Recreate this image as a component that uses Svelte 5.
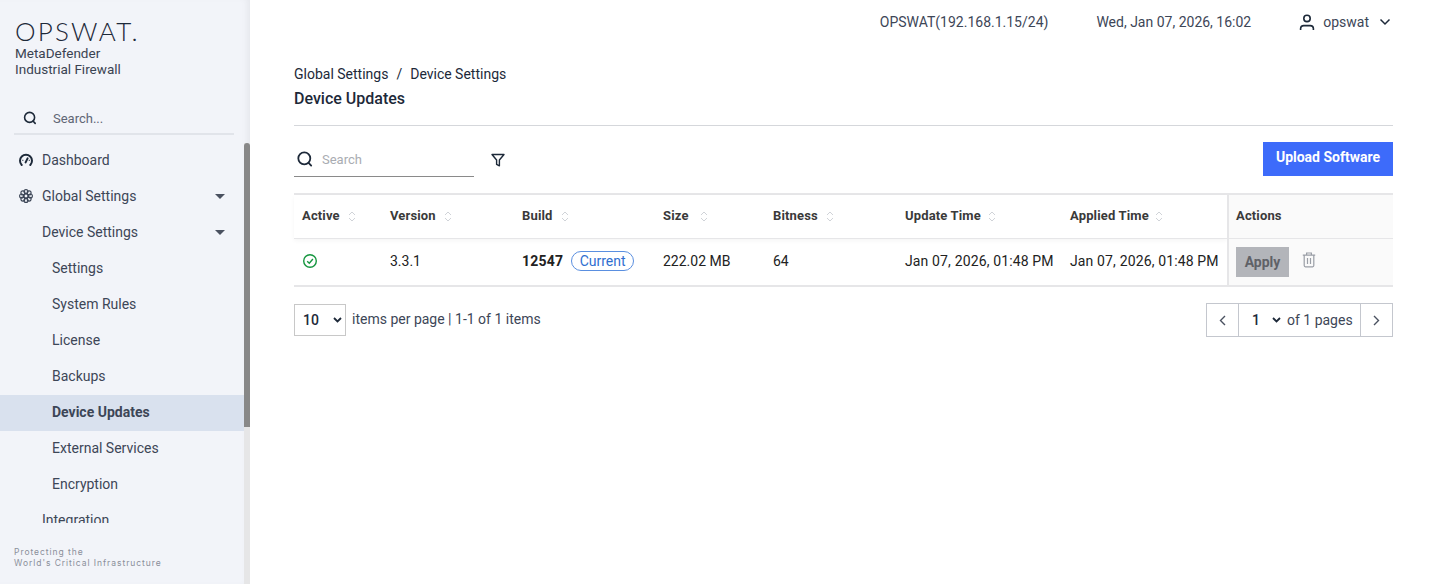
<script>
  const subItems = ['Settings', 'System Rules', 'License', 'Backups', 'Device Updates', 'External Services', 'Encryption'];
  const columns = [
    { label: 'Active', width: 88, gap: 8 },
    { label: 'Version', width: 132, gap: 8 },
    { label: 'Build', width: 141, gap: 8 },
    { label: 'Size', width: 110, gap: 11 },
    { label: 'Bitness', width: 132, gap: 8 },
    { label: 'Update Time', width: 165, gap: 7 },
    { label: 'Applied Time', width: 167, gap: 6 }
  ];
</script>

<div class="page">
  <aside class="sidebar">
    <div class="brand">
      <div class="logo">OPSWAT.</div>
      <div class="product">MetaDefender<br />Industrial Firewall</div>
    </div>

    <div class="nav-search">
      <svg width="16" height="16" viewBox="0 0 16 16" fill="none" stroke="#1d2939" stroke-width="1.6" stroke-linecap="round">
        <circle cx="7.6" cy="7.4" r="5" />
        <path d="M11.2 11.2 13.2 13.4" />
      </svg>
      <span>Search...</span>
    </div>

    <nav>
      <div class="nav-row">
        <svg class="nav-icon" width="14" height="14" viewBox="0 0 14 14" fill="none" stroke="#1d2939" stroke-width="2">
          <path d="M2.700 12A6 6 0 1 1 11.300 12" stroke-linecap="round" />
          <path d="M6.600 9.400 8.600 5.400" stroke-width="2" stroke-linecap="round" />
          <path d="M3.400 7.400h.9M9.800 7.400h.9" stroke-width="1.300" />
        </svg>
        <span>Dashboard</span>
      </div>
      <div class="nav-row">
        <svg class="nav-icon" width="14" height="14" viewBox="0 0 14 14" fill="none" stroke="#3d4657" stroke-width="1.100">
          <circle cx="7" cy="7" r="2" />
          <circle cx="7" cy="2.600" r="2" />
          <circle cx="7" cy="11.400" r="2" />
          <circle cx="2.600" cy="7" r="2" />
          <circle cx="11.400" cy="7" r="2" />
          <circle cx="3.900" cy="3.900" r="2" />
          <circle cx="10.100" cy="3.900" r="2" />
          <circle cx="3.900" cy="10.100" r="2" />
          <circle cx="10.100" cy="10.100" r="2" />
        </svg>
        <span>Global Settings</span>
        <i class="caret"></i>
      </div>
      <div class="nav-row level-1">
        <span>Device Settings</span>
        <i class="caret"></i>
      </div>
      {#each subItems as item}
        <div class="nav-row level-2" class:active={item === 'Device Updates'}>
          <span>{item}</span>
        </div>
      {/each}
      <div class="nav-row level-1">
        <span>Integration</span>
      </div>
    </nav>

    <div class="tagline">Protecting the<br />World's Critical Infrastructure</div>

    <div class="scrollbar"><div class="thumb"></div></div>
  </aside>

  <main class="main">
    <header class="topbar">
      <span class="device">OPSWAT(192.168.1.15/24)</span>
      <span class="clock">Wed, Jan 07, 2026, 16:02</span>
      <div class="user">
        <svg width="18" height="18" viewBox="0 0 18 18" fill="none" stroke="#1d2939" stroke-width="1.600">
          <circle cx="9" cy="5.400" r="3.200" />
          <path d="M2.600 17v-1.400c0-2 1.500-3 3.200-3h6.400c1.700 0 3.200 1 3.200 3V17" />
        </svg>
        <span>opswat</span>
        <svg width="12" height="8" viewBox="0 0 12 8" fill="none" stroke="#1d2939" stroke-width="1.500">
          <path d="M1.500 1.500 6 6l4.500-4.500" />
        </svg>
      </div>
    </header>

    <div class="content">
      <div class="breadcrumb">
        <span>Global Settings</span>
        <span class="sep">/</span>
        <span>Device Settings</span>
      </div>
      <h1>Device Updates</h1>

      <div class="toolbar">
        <div class="search">
          <svg width="18" height="18" viewBox="0 0 18 18" fill="none" stroke="#1d2939" stroke-width="1.800" stroke-linecap="round">
            <circle cx="8.300" cy="8.300" r="6" />
            <path d="M12.600 12.800 15.200 15.600" />
          </svg>
          <span>Search</span>
        </div>
        <svg class="filter" width="14" height="14" viewBox="0 0 14 14" fill="none" stroke="#1d2939" stroke-width="1.400" stroke-linejoin="round">
          <path d="M1 1.500h12L8.400 7v5.800L5.600 11.400V7Z" />
        </svg>
        <button class="upload">Upload Software</button>
      </div>

      <div class="table">
        <div class="table-scroll">
          <div class="row head">
            {#each columns as col}
              <div class="cell" style="width: {col.width}px">
                <span>{col.label}</span>
                <svg class="sort" style="margin-left: {col.gap}px" width="8" height="11" viewBox="0 0 8 11" fill="none" stroke="#d0d3d8" stroke-width="1">
                  <path d="M1 4 4 1l3 3M1 7l3 3 3-3" />
                </svg>
              </div>
            {/each}
          </div>
          <div class="row body">
            <div class="cell" style="width: 88px">
              <svg width="16" height="16" viewBox="0 0 16 16" fill="none" stroke="#15963f" stroke-width="1.400">
                <circle cx="8" cy="8" r="6.300" />
                <path d="M5.200 8.200 7.300 10.200 10.900 6" />
              </svg>
            </div>
            <div class="cell" style="width: 132px">3.3.1</div>
            <div class="cell" style="width: 141px">
              <b>12547</b>
              <span class="pill">Current</span>
            </div>
            <div class="cell" style="width: 110px">222.02 MB</div>
            <div class="cell" style="width: 132px">64</div>
            <div class="cell date" style="width: 165px">Jan 07, 2026, 01:48 PM</div>
            <div class="cell date" style="width: 167px">Jan 07, 2026, 01:48 PM</div>
          </div>
        </div>
        <div class="sticky">
          <div class="sticky-head">Actions</div>
          <div class="sticky-body">
            <span class="apply">Apply</span>
            <svg width="14" height="16" viewBox="0 0 14 16" fill="none" stroke="#9a9ea6" stroke-width="1.200">
              <path d="M.8 3.200h12.400M4.600 3V1h4.800v2M2.200 3.400v10.200c0 .8.500 1.200 1.200 1.200h7.200c.7 0 1.200-.4 1.200-1.200V3.400M5.500 6v6M8.500 6v6" />
            </svg>
          </div>
        </div>
      </div>

      <div class="pager">
        <div class="per-page">
          <div class="select">
            <span>10</span>
            <svg width="9" height="6" viewBox="0 0 9 6" fill="none" stroke="#1d2939" stroke-width="1.800">
              <path d="M1 1l3.500 3.500L8 1" />
            </svg>
          </div>
          <span>items per page | 1-1 of 1 items</span>
        </div>
        <div class="pages">
          <div class="page-btn">
            <svg width="7" height="11" viewBox="0 0 7 11" fill="none" stroke="#4a5160" stroke-width="1.400"><path d="M6 1 1.500 5.500 6 10" /></svg>
          </div>
          <div class="page-num">
            <span class="num">1</span>
            <svg width="9" height="6" viewBox="0 0 9 6" fill="none" stroke="#1d2939" stroke-width="1.800">
              <path d="M1 1l3.500 3.500L8 1" />
            </svg>
            <span>of 1 pages</span>
          </div>
          <div class="page-btn">
            <svg width="7" height="11" viewBox="0 0 7 11" fill="none" stroke="#4a5160" stroke-width="1.400"><path d="M1 1l4.500 4.500L1 10" /></svg>
          </div>
        </div>
      </div>
    </div>
  </main>
</div>

<style>
  :global(body) {
    margin: 0;
    background: #fff;
    font-family: Roboto, "Liberation Sans", sans-serif;
  }

  .page {
    display: flex;
    height: 584px;
    overflow: hidden;
    color: #3d4657;
    font-size: 14px;
  }

  .sidebar {
    position: relative;
    width: 250px;
    flex-shrink: 0;
    display: flex;
    flex-direction: column;
    background: #f2f4f9;
    box-shadow: inset -6px 0 6px -3px rgba(0, 0, 0, 0.05);
  }

  .brand {
    padding: 18px 15px 0;
    height: 86px;
    box-sizing: border-box;
  }

  .logo {
    font-family: Lato, sans-serif;
    font-weight: 300;
    font-size: 26px;
    line-height: 26px;
    letter-spacing: 2.200px;
    color: #1d2939;
  }

  .product {
    margin-top: 1px;
    font-size: 13.500px;
    line-height: 16px;
    color: #3a4352;
  }

  .nav-search {
    display: flex;
    align-items: center;
    gap: 15px;
    margin: 17px 16px 0 14px;
    padding: 0 0 0 8px;
    height: 30px;
    border-bottom: 2px solid #e1e4ea;
    font-size: 13px;
    color: #5f6675;
  }

  nav {
    padding-top: 8px;
    height: 380px;
    overflow: hidden;
  }

  .nav-row {
    display: flex;
    align-items: center;
    height: 36px;
    box-sizing: border-box;
    padding: 0 25px 2px 19px;
  }

  .nav-icon {
    margin-right: 9px;
  }

  .level-1 {
    padding-left: 42px;
  }

  .level-2 {
    padding-left: 52px;
  }

  .active {
    background: #d9e1ee;
    font-weight: 700;
  }

  .caret {
    margin-left: auto;
    width: 0;
    height: 0;
    border-left: 5px solid transparent;
    border-right: 5px solid transparent;
    border-top: 5px solid #4a5160;
  }

  .scrollbar {
    position: absolute;
    top: 143px;
    right: 0;
    bottom: 0;
    width: 6px;
    background: #e6e6e7;
  }

  .thumb {
    height: 284px;
    background: #888;
    border-radius: 3px 3px 0 0;
  }

  .tagline {
    padding: 0 14px;
    margin-top: 24px;
    font-family: Inter, sans-serif;
    font-size: 8.500px;
    line-height: 11px;
    letter-spacing: 0.950px;
    color: #8a8f99;
  }

  .main {
    flex: 1;
    min-width: 0;
  }

  .topbar {
    display: flex;
    align-items: center;
    justify-content: flex-end;
    height: 44px;
    padding-right: 45px;
    color: #3d4657;
  }

  .device {
    margin-right: 48px;
  }

  .clock {
    margin-right: 47px;
  }

  .user {
    display: flex;
    align-items: center;
    gap: 7px;
  }

  .user svg:last-child {
    margin-left: 3px;
  }

  .content {
    padding: 21px 43px 0 44px;
  }

  .breadcrumb {
    display: flex;
    gap: 8px;
    line-height: 18px;
    color: #1d2939;
  }

  h1 {
    margin: 6px 0 0;
    font-size: 16px;
    font-weight: 500;
    line-height: 20px;
    color: #1d2939;
    padding-bottom: 16px;
    border-bottom: 1px solid #d5d7db;
  }

  .toolbar {
    display: flex;
    align-items: flex-start;
    margin-top: 16px;
  }

  .search {
    display: flex;
    align-items: center;
    gap: 8px;
    width: 180px;
    height: 35px;
    padding-left: 2px;
    box-sizing: border-box;
    border-bottom: 1px solid #8a8a8a;
    font-size: 13px;
    color: #a9acb2;
  }

  .filter {
    margin: 11px 0 0 17px;
  }

  .upload {
    margin-left: auto;
    width: 130px;
    height: 34px;
    padding: 0 0 4px;
    border: 0;
    background: #3d6bfa;
    color: #fff;
    font: 700 14px Roboto, sans-serif;
  }

  .table {
    display: flex;
    margin-top: 16px;
    border-top: 2px solid #e6e6e8;
    border-bottom: 2px solid #e6e6e8;
  }

  .table-scroll {
    flex: 1;
    min-width: 0;
  }

  .row {
    display: flex;
  }

  .cell {
    display: flex;
    align-items: center;
    box-sizing: border-box;
    padding: 0 0 3px 8px;
    flex-shrink: 0;
    white-space: nowrap;
  }

  .head {
    height: 44px;
    box-sizing: border-box;
    border-bottom: 1px solid #e6e6e8;
    box-shadow: 0 2px 4px rgba(0, 0, 0, 0.04);
    font-size: 13px;
    font-weight: 700;
    letter-spacing: 0.150px;
    color: #3a3a3a;
  }

  .sort {
    margin-top: 2px;
  }

  .body {
    height: 46px;
    color: #222;
  }

  .body .cell {
    padding-bottom: 2px;
  }

  .body b {
    font-weight: 700;
    letter-spacing: 0.200px;
  }

  .date {
    letter-spacing: 0.140px;
  }

  .pill {
    margin-left: 8px;
    padding: 0 7.500px;
    height: 18px;
    line-height: 18px;
    border: 1px solid #5a8fe0;
    border-radius: 10px;
    color: #2f6fd0;
  }

  .sticky {
    width: 164px;
    flex-shrink: 0;
    background: #fafafa;
    border-left: 2px solid #e6e6e8;
  }

  .sticky-head {
    height: 44px;
    box-sizing: border-box;
    padding: 0 7px 3px;
    display: flex;
    align-items: center;
    border-bottom: 1px solid #e6e6e8;
    font-size: 13px;
    font-weight: 700;
    letter-spacing: 0.150px;
    color: #3a3a3a;
  }

  .sticky-body {
    display: flex;
    align-items: flex-start;
    gap: 13px;
    padding: 8px 7px 0;
    height: 46px;
    box-sizing: border-box;
  }

  .sticky-body svg {
    margin-top: 5px;
  }

  .apply {
    width: 53px;
    height: 30px;
    line-height: 30px;
    text-align: center;
    background: #b3b5ba;
    color: #5f6167;
    font-weight: 700;
  }

  .pager {
    display: flex;
    justify-content: space-between;
    margin-top: 17px;
  }

  .per-page {
    display: flex;
    align-items: center;
    gap: 6px;
    height: 32px;
    color: #3d4657;
  }

  .per-page > span {
    padding-bottom: 2px;
  }

  .select {
    display: flex;
    align-items: center;
    justify-content: space-between;
    width: 52px;
    height: 32px;
    padding: 0 3px 0 8px;
    box-sizing: border-box;
    border: 1px solid #c8c8c8;
    color: #1d2939;
    font-weight: 500;
  }

  .pages {
    display: flex;
    height: 34px;
    margin-top: -1px;
    box-sizing: border-box;
    border: 1px solid #c4c7ce;
  }

  .page-btn {
    display: flex;
    align-items: center;
    justify-content: center;
    width: 31px;
  }

  .page-num {
    display: flex;
    align-items: center;
    width: 123px;
    box-sizing: border-box;
    padding-left: 13px;
    border-left: 1px solid #c4c7ce;
    border-right: 1px solid #c4c7ce;
  }

  .num {
    color: #1d2939;
    font-weight: 500;
    margin-right: 12px;
  }

  .page-num svg {
    margin-right: 6px;
  }
</style>
